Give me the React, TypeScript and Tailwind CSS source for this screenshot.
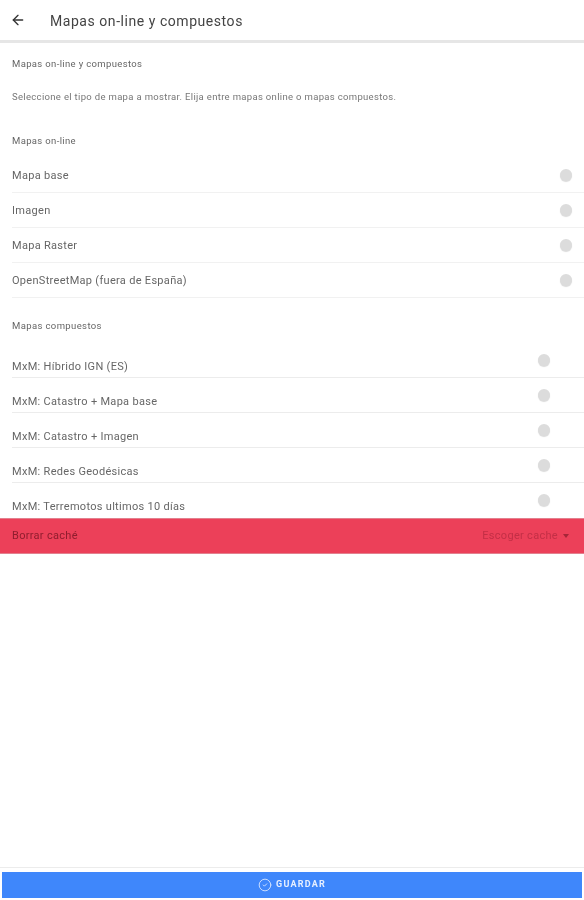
import React from 'react';
import { ArrowLeft, CircleCheck } from 'lucide-react';

const onlineMaps = ['Mapa base', 'Imagen', 'Mapa Raster', 'OpenStreetMap (fuera de España)'];
const compositeMaps = [
  'MxM: Híbrido IGN (ES)',
  'MxM: Catastro + Mapa base',
  'MxM: Catastro + Imagen',
  'MxM: Redes Geodésicas',
  'MxM: Terremotos ultimos 10 días',
];

function Radio() {
  return <span className="block w-3 h-3 rounded-full bg-[#dcdcdc] shadow-[0_1px_1px_rgba(0,0,0,0.15)]" />;
}

export default function App() {
  return (
    <div className="w-[584px] h-[900px] bg-white flex flex-col overflow-hidden font-['Roboto',sans-serif] blur-[0.5px]">
      {/* Header */}
      <div className="h-[43px] shrink-0 flex items-center border-b-[3px] border-[#e6e6e6]">
        <ArrowLeft className="w-4 h-4 ml-[10px] text-[#333]" strokeWidth={2} />
        <span className="ml-[24px] mt-[2px] text-[14px] tracking-[0.55px] text-[#444]">Mapas on-line y compuestos</span>
      </div>

      <div className="flex-1 flex flex-col">
        <p className="pl-3 mt-[14px] h-[14px] leading-[14px] text-[9.5px] tracking-[0.35px] text-[#666]">Mapas on-line y compuestos</p>
        <p className="pl-3 mt-[19px] h-[14px] leading-[14px] text-[9.5px] tracking-[0.325px] text-[#777]">
          Seleccione el tipo de mapa a mostrar. Elija entre mapas online o mapas compuestos.
        </p>
        <p className="pl-3 mt-[30px] h-[14px] leading-[14px] text-[9.5px] tracking-[0.35px] text-[#666]">Mapas on-line</p>

        {/* Mapas on-line */}
        <div className="mt-[10px] pl-3">
          {onlineMaps.map(name => (
            <div key={name} className="h-[35px] flex items-center justify-between pr-3 border-b border-[#f1f1f1]">
              <span className="mt-[2px] text-[11px] tracking-[0.3px] text-[#666]">{name}</span>
              <Radio />
            </div>
          ))}
        </div>

        <p className="pl-3 mt-[21px] h-[14px] leading-[14px] text-[9.5px] tracking-[0.38px] text-[#666]">Mapas compuestos</p>

        {/* Mapas compuestos */}
        <div className="mt-[10px] pl-3">
          {compositeMaps.map((name, i) => (
            <div
              key={name}
              className={`h-[35px] flex justify-between pr-[34px] ${i < compositeMaps.length - 1 ? 'border-b border-[#ececec]' : ''}`}
            >
              <span className="mt-[17px] h-[14px] leading-[14px] text-[11px] tracking-[0.3px] text-[#666]">{name}</span>
              <span className="mt-[11px]"><Radio /></span>
            </div>
          ))}
        </div>

        {/* Borrar caché */}
        <div className="h-[36px] shrink-0 flex items-center justify-between pl-3 pr-[15px] bg-[#ec4059] border-y border-[#e2808e]">
          <span className="text-[11px] tracking-[0.3px] text-[#8f1d2e]">Borrar caché</span>
          <span className="flex items-center gap-[5px] text-[11px] tracking-[0.3px] text-[#c32f46]">
            Escoger cache
            <span className="w-0 h-0 border-x-[3px] border-x-transparent border-t-[4px] border-t-[#a52638]" />
          </span>
        </div>
      </div>

      {/* Guardar */}
      <div className="h-[33px] shrink-0 px-[2px] pt-[4px] pb-[2px] border-t border-[#ececec]">
        <div className="h-full bg-[#3f87fb] flex items-center justify-center gap-[4px] text-white">
          <CircleCheck className="w-[14px] h-[14px] text-[#dbe8ff]" strokeWidth={1.5} />
          <span className="text-[9px] font-bold tracking-[1.2px] text-[#e6efff]">GUARDAR</span>
        </div>
      </div>
    </div>
  );
}
